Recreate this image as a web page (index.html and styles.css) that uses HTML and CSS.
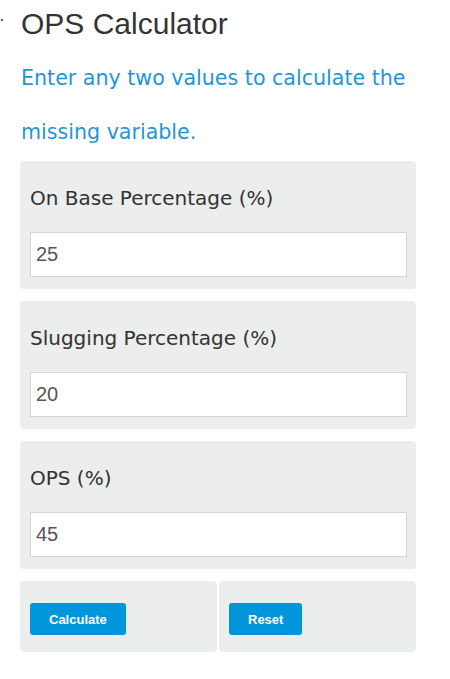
FILE: index.html
```html
<!DOCTYPE html>
<html>
<head>
<meta charset="utf-8">
<link rel="stylesheet" href="styles.css">
</head>
<body>
<div class="page">
  <h1 class="title"><span class="dot"></span>OPS Calculator</h1>
  <p class="intro">Enter any two values to calculate the missing variable.</p>
  <div class="field">
    <label class="label">On Base Percentage (%)</label>
    <input class="input" type="text" value="25">
  </div>
  <div class="field">
    <label class="label">Slugging Percentage (%)</label>
    <input class="input" type="text" value="20">
  </div>
  <div class="field">
    <label class="label">OPS (%)</label>
    <input class="input" type="text" value="45">
  </div>
  <div class="actions">
    <div class="cell"><button class="btn">Calculate</button></div>
    <div class="cell"><button class="btn">Reset</button></div>
  </div>
</div>
</body>
</html>
```
FILE: styles.css
```css
html, body {
  margin: 0;
  padding: 0;
  background: #ffffff;
}
.page {
  width: 396px;
  padding-left: 20px;
}
.title {
  position: relative;
  margin: 6px 0 0 1px;
  font-family: "Liberation Sans", Arial, sans-serif;
  font-weight: normal;
  font-size: 30px;
  line-height: 36px;
  color: #333333;
}
.dot {
  position: absolute;
  left: -20px;
  top: 13px;
  width: 2px;
  height: 2px;
  background: #555555;
}
.intro {
  margin: 9px 0 2px 1px;
  font-family: "DejaVu Sans", Verdana, sans-serif;
  font-size: 20.6px;
  line-height: 54px;
  color: #1f96d9;
}
.field {
  display: flex;
  flex-direction: column;
  background: #eceded;
  border-radius: 4px;
  padding: 0 9px 12px 10px;
  margin-bottom: 12px;
}
.label {
  margin-top: 25px;
  font-family: "DejaVu Sans", Verdana, sans-serif;
  font-size: 20px;
  line-height: 24px;
  color: #333333;
}
.input {
  box-sizing: border-box;
  margin-top: 22px;
  width: 377px;
  height: 45px;
  padding: 0 5px;
  border: 1px solid #d3d6d8;
  background: #ffffff;
  font-family: "Liberation Sans", Arial, sans-serif;
  font-size: 20px;
  color: #555555;
  outline: none;
}
.actions {
  display: flex;
  gap: 2px;
}
.cell {
  flex: 1;
  background: #eceded;
  border-radius: 4px;
  padding: 22px 10px 17px;
}
.btn {
  height: 32px;
  padding: 0 19px;
  border: none;
  border-radius: 3px;
  background: #0096db;
  color: #ffffff;
  font-family: "Liberation Sans", Arial, sans-serif;
  font-weight: bold;
  font-size: 13px;
}
```
